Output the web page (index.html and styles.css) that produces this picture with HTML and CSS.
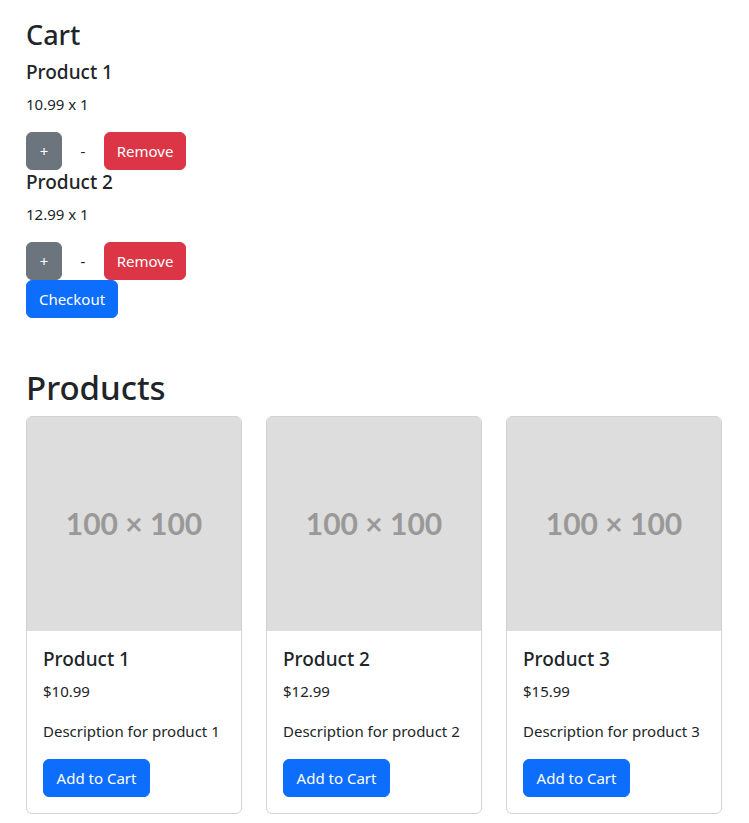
FILE: index.html
```html
<!DOCTYPE html>
<html lang="en">
<head>
<meta charset="utf-8">
<title>Shop</title>
<link rel="stylesheet" href="styles.css">
</head>
<body>
<div class="container">
  <section class="cart">
    <h2 class="h2">Cart</h2>
    <div class="cart-item">
      <h5 class="h5">Product 1</h5>
      <p class="text">10.99 x 1</p>
      <div class="btn-row">
        <button class="btn btn-secondary btn-plus">+</button>
        <button class="btn btn-plain btn-minus">-</button>
        <button class="btn btn-danger btn-remove">Remove</button>
      </div>
    </div>
    <div class="cart-item">
      <h5 class="h5">Product 2</h5>
      <p class="text">12.99 x 1</p>
      <div class="btn-row">
        <button class="btn btn-secondary btn-plus">+</button>
        <button class="btn btn-plain btn-minus">-</button>
        <button class="btn btn-danger btn-remove">Remove</button>
      </div>
    </div>
    <button class="btn btn-primary btn-checkout">Checkout</button>
  </section>

  <section class="products">
    <h1 class="h1">Products</h1>
    <div class="grid">
      <div class="card">
        <div class="card-img"><span>100 × 100</span></div>
        <div class="card-body">
          <h5 class="h5 card-title">Product 1</h5>
          <p class="text price">$10.99</p>
          <p class="text">Description for product 1</p>
          <button class="btn btn-primary btn-add">Add to Cart</button>
        </div>
      </div>
      <div class="card">
        <div class="card-img"><span>100 × 100</span></div>
        <div class="card-body">
          <h5 class="h5 card-title">Product 2</h5>
          <p class="text price">$12.99</p>
          <p class="text">Description for product 2</p>
          <button class="btn btn-primary btn-add">Add to Cart</button>
        </div>
      </div>
      <div class="card">
        <div class="card-img"><span>100 × 100</span></div>
        <div class="card-body">
          <h5 class="h5 card-title">Product 3</h5>
          <p class="text price">$15.99</p>
          <p class="text">Description for product 3</p>
          <button class="btn btn-primary btn-add">Add to Cart</button>
        </div>
      </div>
    </div>
  </section>
</div>
</body>
</html>
```

FILE: styles.css
```css
* { box-sizing: border-box; }
html, body { margin: 0; padding: 0; background: #fff; }
body {
  font-family: "Noto Sans", "Open Sans", sans-serif;
  font-size: 15px;
  line-height: 24px;
  color: #212529;
}
.container {
  padding: 19px 27px 0 26px;
}
.h2, .h1, .h5 { margin: 0 0 8px; font-weight: 500; line-height: 1.2; }
.h2 { font-size: 27px; height: 33px; }
.h1 { font-size: 33px; height: 40px; }
.h5 { font-size: 19px; height: 24px; line-height: 24px; }
.text { margin: 0 0 16px; height: 24px; }
.btn-row { display: flex; }
.btn {
  display: inline-flex;
  align-items: center;
  justify-content: center;
  height: 38px;
  padding: 0 12px;
  border: 1px solid transparent;
  border-radius: 6px;
  font-family: inherit;
  font-size: 15px;
  line-height: 24px;
  color: #fff;
  background: transparent;
  cursor: pointer;
}
.btn-secondary { background: #6c757d; border-color: #6c757d; }
.btn-danger { background: #dc3545; border-color: #dc3545; }
.btn-primary { background: #0d6efd; border-color: #0d6efd; }
.btn-plain { color: #212529; }
.btn-plus { width: 36px; }
.btn-minus { width: 42px; }
.btn-remove { width: 82px; }
.btn-checkout { width: 92px; }
.btn-add { width: 107px; }
.products { margin-top: 50px; }
.grid {
  display: grid;
  grid-template-columns: repeat(3, 216px);
  column-gap: 24px;
}
.card {
  border: 1px solid rgba(0,0,0,0.175);
  border-radius: 6px;
  overflow: hidden;
  display: flex;
  flex-direction: column;
}
.card-img {
  height: 214px;
  padding-bottom: 3px;
  background: #dddddd;
  display: flex;
  align-items: center;
  justify-content: center;
  color: #999999;
  font-family: Lato, sans-serif;
  font-weight: 700;
  font-size: 30px;
}
.card-body { padding: 16px; }
.card-title { margin-bottom: 8px; }
```
